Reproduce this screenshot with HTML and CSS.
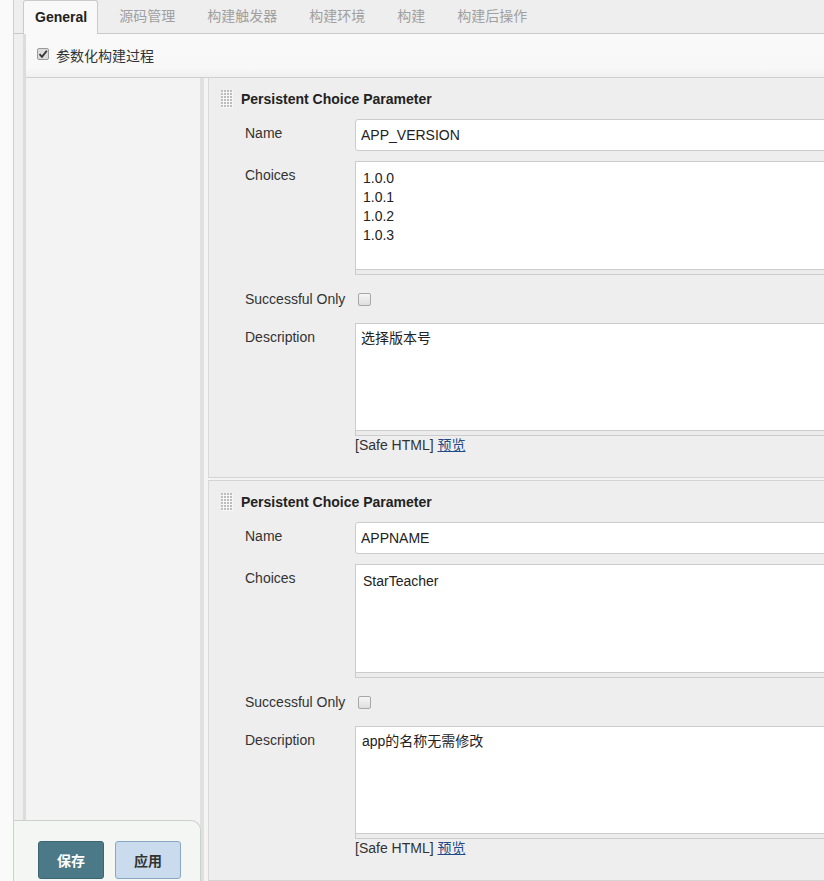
FILE: index.html
```html
<!DOCTYPE html>
<html lang="zh-CN">
<head>
<meta charset="utf-8">
<title>Config</title>
<link rel="stylesheet" href="styles.css">
</head>
<body>
<div class="app">
  <nav class="tabs">
    <span class="tab active">General</span>
    <span class="tab">源码管理</span>
    <span class="tab">构建触发器</span>
    <span class="tab">构建环境</span>
    <span class="tab">构建</span>
    <span class="tab">构建后操作</span>
  </nav>
  <div class="section">
    <div class="optrow">
      <span class="cb checked"><svg width="12" height="12" viewBox="0 0 12 12"><path d="M2.5 6.2 L5 8.8 L9.8 2.8" fill="none" stroke="#333" stroke-width="1.8"/></svg></span>
      <span class="opttext">参数化构建过程</span>
    </div>
    <div class="body">
      <div class="leftcol"></div>
      <div class="params">
        <div class="block">
          <div class="head">
            <svg class="handle" width="12" height="18" viewBox="0 0 12 18"><rect width="12" height="18" fill="#f7f7f7"/><g fill="#bdbdbd"><rect x="0" y="0" width="2" height="2"/><rect x="3" y="0" width="2" height="2"/><rect x="6" y="0" width="2" height="2"/><rect x="9" y="0" width="2" height="2"/><rect x="0" y="3" width="2" height="2"/><rect x="3" y="3" width="2" height="2"/><rect x="6" y="3" width="2" height="2"/><rect x="9" y="3" width="2" height="2"/><rect x="0" y="6" width="2" height="2"/><rect x="3" y="6" width="2" height="2"/><rect x="6" y="6" width="2" height="2"/><rect x="9" y="6" width="2" height="2"/><rect x="0" y="9" width="2" height="2"/><rect x="3" y="9" width="2" height="2"/><rect x="6" y="9" width="2" height="2"/><rect x="9" y="9" width="2" height="2"/><rect x="0" y="12" width="2" height="2"/><rect x="3" y="12" width="2" height="2"/><rect x="6" y="12" width="2" height="2"/><rect x="9" y="12" width="2" height="2"/><rect x="0" y="15" width="2" height="2"/><rect x="3" y="15" width="2" height="2"/><rect x="6" y="15" width="2" height="2"/><rect x="9" y="15" width="2" height="2"/></g></svg>
            <span class="title">Persistent Choice Parameter</span>
          </div>
          <div class="row r-name">
            <span class="label">Name</span>
            <div class="field"><input class="text" type="text" value="APP_VERSION" readonly></div>
          </div>
          <div class="row r-ta">
            <span class="label">Choices</span>
            <div class="field"><textarea class="ta choices" readonly>1.0.0
1.0.1
1.0.2
1.0.3</textarea><div class="grip"></div></div>
          </div>
          <div class="row r-cb">
            <span class="label mid">Successful Only</span>
            <div class="field mid"><span class="cb empty"></span></div>
          </div>
          <div class="row r-ta">
            <span class="label">Description</span>
            <div class="field"><textarea class="ta desc" readonly>选择版本号</textarea><div class="grip"></div></div>
          </div>
          <div class="row r-safe">
            <span class="label"></span>
            <div class="field safe">[Safe HTML] <a href="#" class="link">预览</a></div>
          </div>
        </div>
        <div class="block second">
          <div class="head">
            <svg class="handle" width="12" height="18" viewBox="0 0 12 18"><rect width="12" height="18" fill="#f7f7f7"/><g fill="#bdbdbd"><rect x="0" y="0" width="2" height="2"/><rect x="3" y="0" width="2" height="2"/><rect x="6" y="0" width="2" height="2"/><rect x="9" y="0" width="2" height="2"/><rect x="0" y="3" width="2" height="2"/><rect x="3" y="3" width="2" height="2"/><rect x="6" y="3" width="2" height="2"/><rect x="9" y="3" width="2" height="2"/><rect x="0" y="6" width="2" height="2"/><rect x="3" y="6" width="2" height="2"/><rect x="6" y="6" width="2" height="2"/><rect x="9" y="6" width="2" height="2"/><rect x="0" y="9" width="2" height="2"/><rect x="3" y="9" width="2" height="2"/><rect x="6" y="9" width="2" height="2"/><rect x="9" y="9" width="2" height="2"/><rect x="0" y="12" width="2" height="2"/><rect x="3" y="12" width="2" height="2"/><rect x="6" y="12" width="2" height="2"/><rect x="9" y="12" width="2" height="2"/><rect x="0" y="15" width="2" height="2"/><rect x="3" y="15" width="2" height="2"/><rect x="6" y="15" width="2" height="2"/><rect x="9" y="15" width="2" height="2"/></g></svg>
            <span class="title">Persistent Choice Parameter</span>
          </div>
          <div class="row r-name">
            <span class="label">Name</span>
            <div class="field"><input class="text" type="text" value="APPNAME" readonly></div>
          </div>
          <div class="row r-ta">
            <span class="label">Choices</span>
            <div class="field"><textarea class="ta choices" readonly>StarTeacher</textarea><div class="grip"></div></div>
          </div>
          <div class="row r-cb">
            <span class="label mid">Successful Only</span>
            <div class="field mid"><span class="cb empty"></span></div>
          </div>
          <div class="row r-ta">
            <span class="label">Description</span>
            <div class="field"><textarea class="ta desc desc2" readonly>app的名称无需修改</textarea><div class="grip"></div></div>
          </div>
          <div class="row r-safe">
            <span class="label"></span>
            <div class="field safe">[Safe HTML] <a href="#" class="link">预览</a></div>
          </div>
        </div>
      </div>
    </div>
  </div>
  <div class="bottombar">
    <button class="btn save" type="button">保存</button>
    <button class="btn apply" type="button">应用</button>
  </div>
</div>
</body>
</html>
```
FILE: styles.css
```css
html, body {
  margin: 0;
  padding: 0;
  overflow: hidden;
  height: 881px;
}
body {
  background: #fafafa;
  font-family: "Liberation Sans", Arial, "Noto Sans CJK SC", sans-serif;
  font-size: 14px;
  color: #333;
}
.app {
  position: relative;
  margin-left: 13px;
  border-left: 1px solid #cfcfcf;
  width: 810px;
  height: 881px;
  background: #efefef;
  overflow: hidden;
}
.tabs {
  display: flex;
  align-items: flex-end;
  height: 33px;
  border-bottom: 1px solid #cacaca;
  padding-left: 9px;
  background: #eeeeee;
}
.tab {
  padding: 0 16px;
  height: 33px;
  line-height: 32px;
  color: #a0a0a0;
  white-space: nowrap;
}
.tab.active {
  box-sizing: border-box;
  height: 34px;
  margin-bottom: -1px;
  padding: 0 10px 0 11px;
  margin-right: 5px;
  background: #f9f9f9;
  border: 1px solid #cacaca;
  border-bottom: none;
  border-radius: 3px 3px 0 0;
  color: #222;
  font-weight: bold;
}
.section {
  margin-left: 9px;
  border-left: 3px solid #dcdcdc;
  height: 847px;
  display: flex;
  flex-direction: column;
}
.optrow {
  box-sizing: border-box;
  height: 44px;
  display: flex;
  align-items: center;
  padding: 0 0 3px 11px;
  background: linear-gradient(#f9f9f9 0, #f8f8f8 78%, #f0f0f0 100%);
  border-bottom: 1px solid #d0d0d0;
}
.opttext {
  margin-left: 7px;
  padding-top: 1px;
  color: #333;
}
.cb {
  display: inline-block;
  box-sizing: border-box;
  width: 13px;
  height: 13px;
  border: 1px solid #a8a8a8;
  border-radius: 2px;
  background: linear-gradient(#f6f6f6, #dedede);
}
.cb.checked {
  width: 12px;
  height: 12px;
  position: relative;
  background: #dcdcdc;
  border-color: #9a9a9a;
}
.cb.checked svg {
  display: block;
  margin: -1px 0 0 -1px;
}
.body {
  flex: 1;
  display: flex;
}
.leftcol {
  width: 174px;
  background: #f3f3f3;
}
.params {
  flex: 1;
  min-width: 0;
  border-left: 4px solid #e0e0e0;
  padding-left: 4px;
  background: #f4f4f4;
}
.block {
  background: #eeeeee;
  border-left: 1px solid #d8d8d8;
  border-bottom: 1px solid #d4d4d4;
  padding: 11px 0 23px 36px;
}
.block.second {
  margin-top: 2px;
  border-top: 1px solid #d4d4d4;
}
.head {
  display: flex;
  align-items: center;
  height: 20px;
  margin-left: -24px;
}
.handle {
  display: block;
  margin-right: 8px;
}
.title {
  font-weight: bold;
  color: #222;
}
.row {
  display: flex;
  margin-top: 10px;
}
.label {
  width: 110px;
  flex: none;
  padding-top: 6px;
  line-height: 16px;
  color: #333;
}
.label.mid {
  padding-top: 0;
  align-self: center;
}
.field {
  flex: 1;
  display: flex;
  flex-direction: column;
  margin-right: -12px;
}
.field.mid {
  justify-content: center;
  padding-left: 3px;
}
.r-cb {
  height: 28px;
}
.text {
  box-sizing: border-box;
  height: 32px;
  width: 100%;
  border: 1px solid #cccccc;
  border-radius: 3px;
  background: #fff;
  padding: 0 5px;
  font: inherit;
  color: #222;
  outline: none;
}
.ta {
  box-sizing: border-box;
  width: 100%;
  height: 109px;
  margin: 0;
  border: 1px solid #cccccc;
  background: #fff;
  font: inherit;
  color: #222;
  line-height: 19px;
  resize: none;
  outline: none;
  overflow: hidden;
}
.choices {
  padding: 7px 7px 5px;
}
.desc {
  height: 108px;
  padding: 5px 5px 4px;
}
.desc2 {
  padding: 5px 6px 4px;
}
.grip {
  height: 4px;
  border: 1px solid #cccccc;
  border-top: none;
  background: #ececec;
}
.r-safe {
  margin-top: 0;
}
.safe {
  display: block;
  line-height: 18px;
  color: #333;
}
.link {
  color: #204a87;
  text-decoration: underline;
}
.bottombar {
  position: absolute;
  left: 0;
  top: 820px;
  box-sizing: border-box;
  width: 187px;
  height: 61px;
  background: #f3f6f2;
  border-top: 1px solid #c9d3c9;
  border-right: 1px solid #c9d3c9;
  border-top-right-radius: 10px;
  padding: 20px 0 0 24px;
  display: flex;
  gap: 11px;
  align-items: flex-start;
}
.btn {
  box-sizing: border-box;
  width: 66px;
  height: 38px;
  border-radius: 3px;
  font-family: "Liberation Sans", Arial, "Noto Sans CJK SC", sans-serif;
  font-size: 14px;
  font-weight: bold;
  padding: 0;
}
.save {
  background: #4b7987;
  border: 1px solid #3a6572;
  color: #fff;
}
.apply {
  background: #c9dbed;
  border: 1px solid #88a8c6;
  color: #333;
}
```
